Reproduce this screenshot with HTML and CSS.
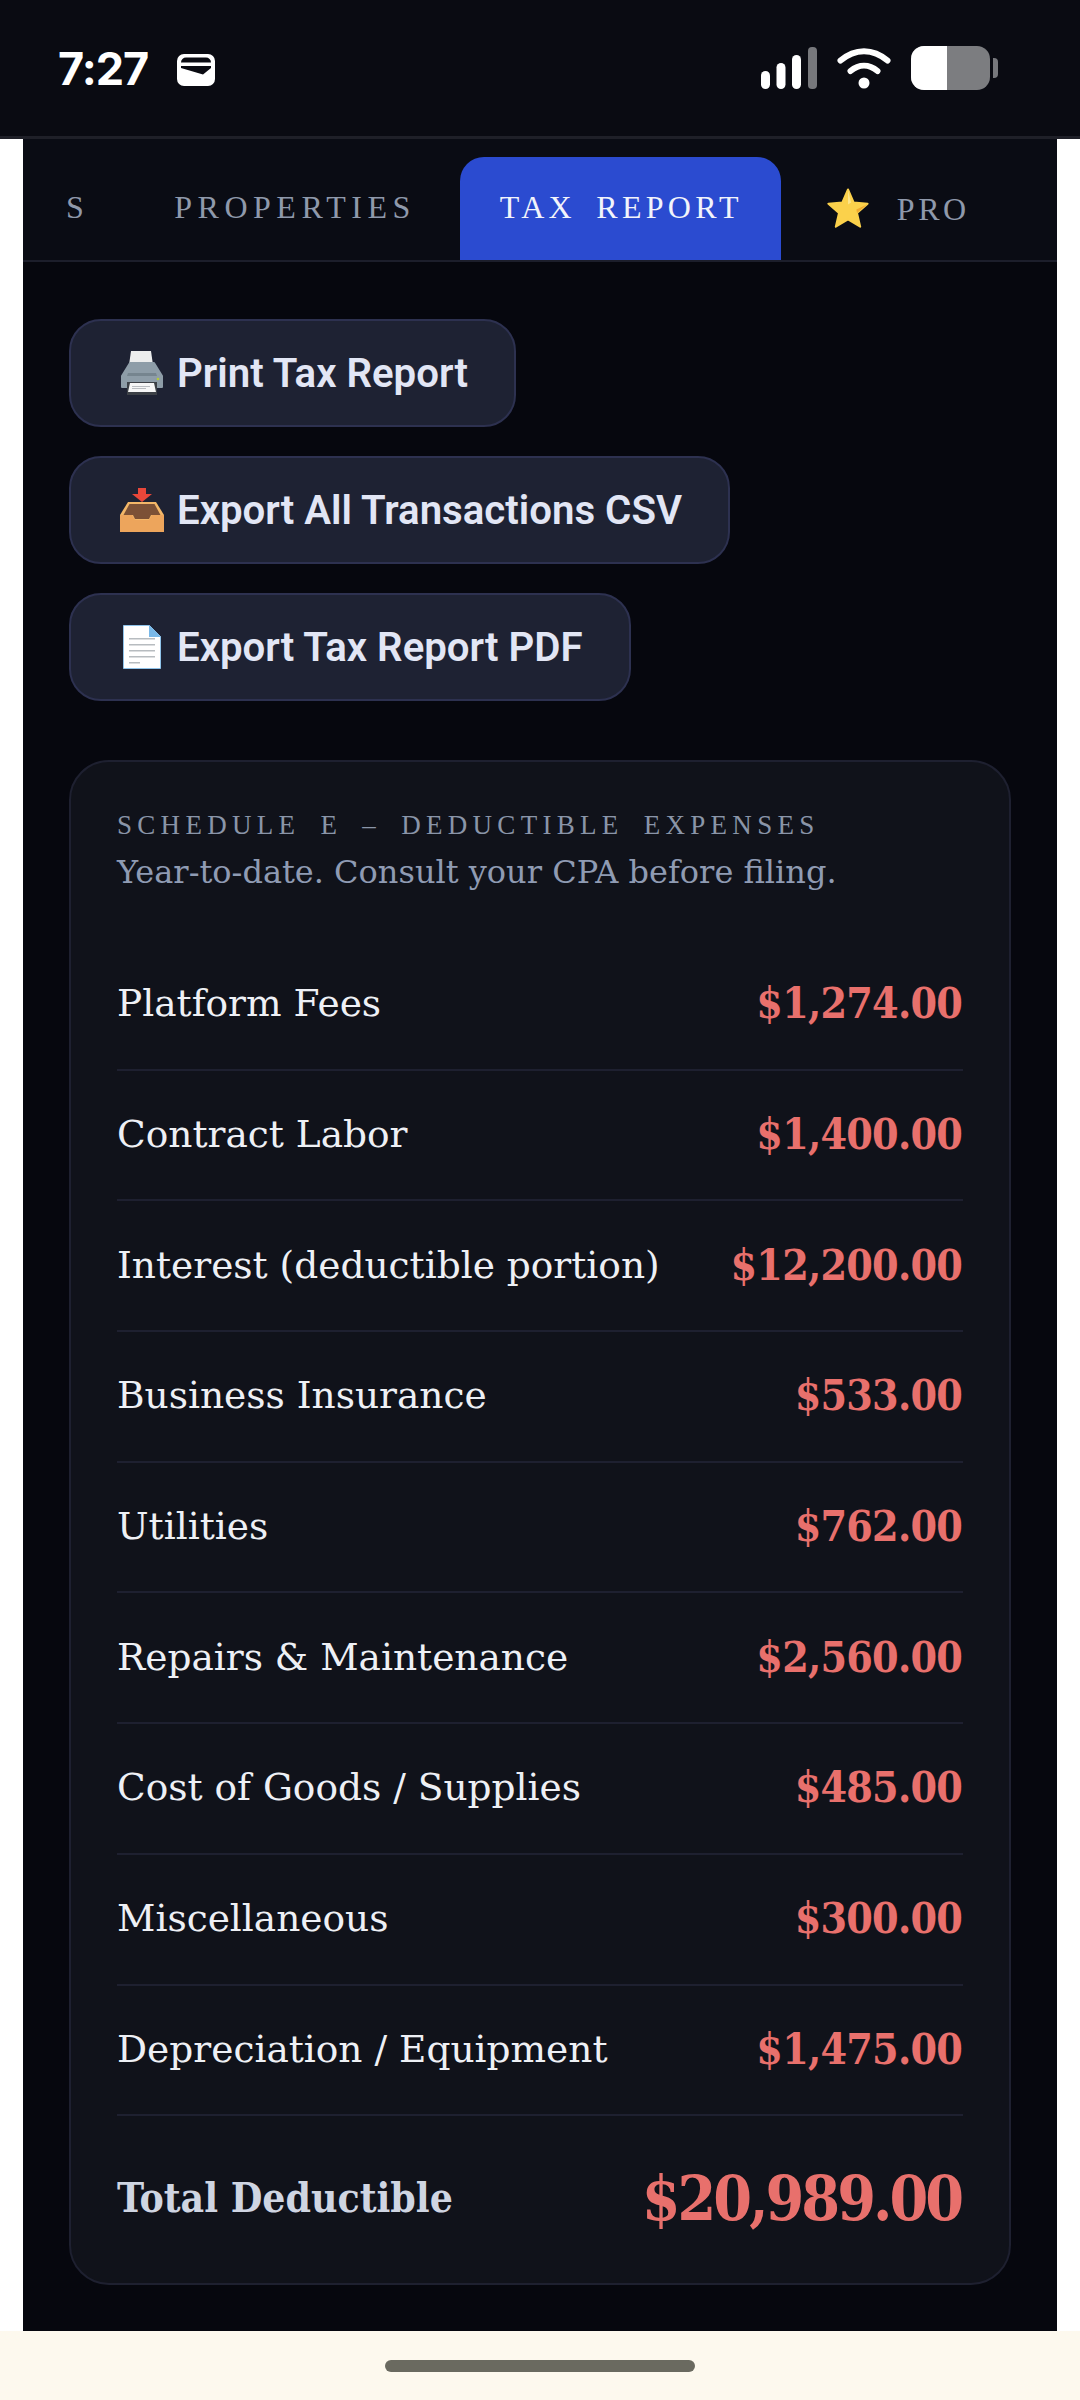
FILE: index.html
```html
<!DOCTYPE html>
<html lang="en">
<head>
  <meta charset="UTF-8">
  <meta name="viewport" content="width=device-width, initial-scale=1.0">
  <title>Tax Report</title>
  <link rel="stylesheet" href="styles.css">
</head>
<body>
  <header class="status">
    <div class="status-left">
      <span class="clock">7:27</span>
      <svg class="wallet" viewBox="0 0 38 32">
        <path fill="#fff" fill-rule="evenodd" d="M7 0h24a7 7 0 0 1 7 7v18a7 7 0 0 1-7 7H7a7 7 0 0 1-7-7V7a7 7 0 0 1 7-7zM4 8.500h30a5 5 0 0 0-5-5H9a5 5 0 0 0-5 5zM4 12v2l22 6.500 8-6.500v-2z"/>
      </svg>
    </div>
    <div class="status-right">
      <svg class="signal" viewBox="0 0 56 42">
        <rect x="0" y="24" width="9" height="18" rx="4.500" fill="#fff"/>
        <rect x="15.500" y="16" width="9" height="26" rx="4.500" fill="#fff"/>
        <rect x="31" y="8" width="9" height="34" rx="4.500" fill="#fff"/>
        <rect x="47" y="0" width="9" height="42" rx="4" fill="#77787c"/>
      </svg>
      <svg class="wifi" viewBox="0 0 54 42">
        <path d="M3.500 13.500C18 1 36 1 50.500 13.500" fill="none" stroke="#fff" stroke-width="6" stroke-linecap="round"/>
        <path d="M13.500 24C22 17 32 17 40.500 24" fill="none" stroke="#fff" stroke-width="6" stroke-linecap="round"/>
        <circle cx="27" cy="36" r="5.500" fill="#fff"/>
      </svg>
      <div class="battery">
        <div class="battery-body"><div class="battery-level"></div></div>
        <div class="battery-cap"></div>
      </div>
    </div>
  </header>

  <main class="page">
    <nav class="tabs">
      <div class="tab tab-cut">S</div>
      <div class="tab">PROPERTIES</div>
      <div class="tab active">TAX REPORT</div>
      <div class="tab tab-pro">
        <svg class="star" viewBox="0 0 42 40">
          <path fill="#fbd14b" stroke="#fbd14b" stroke-width="2" stroke-linejoin="round" d="M21 1.500l5.600 13 14 1.200-10.600 9.200 3.200 13.800L21 31.500 8.800 38.700 12 24.900 1.400 15.700l14-1.200z"/>
          <path fill="#f0a92e" d="M40 16.500L30 25l-.600-3.500z"/>
          <path fill="#fde58a" d="M21 2l3 12.500-3 2z"/>
        </svg>
        <span>PRO</span>
      </div>
    </nav>

    <div class="content">
      <div class="actions">
        <button class="btn">
          <svg class="emoji" viewBox="0 0 44 44">
            <path fill="#eceded" d="M11 0h20l2 14H9z"/>
            <path fill="#8e9da8" stroke="#8e9da8" stroke-width="2" stroke-linejoin="round" d="M10 12h24l8 13v11H2V25z"/>
            <path fill="#76858f" d="M8 22h28l1 3H7z"/>
            <circle cx="38" cy="28" r="1.300" fill="#b4c93c"/>
            <path fill="#3c4046" d="M7 31h30v13H7z"/>
            <path fill="#f6f6f6" d="M10 32h24l2 9H8z"/>
            <path fill="#b9bcc0" d="M12 35h18v1H12zM12 37h14v1H12z"/>
          </svg>
          Print Tax Report
        </button>
        <button class="btn">
          <svg class="emoji" viewBox="0 0 44 44">
            <path fill="#e8473a" d="M18 0h8v6h6L22 14 12 6h6z"/>
            <path fill="#f3b768" d="M8 14h28l8 13v17H0V27z"/>
            <path fill="#7c5136" d="M9.500 16h25l6 11H31l-2 4H15l-2-4H3.500z"/>
            <path fill="#eda55c" d="M0 27h12l3 5h14l3-5h12v17H0z"/>
          </svg>
          Export All Transactions CSV
        </button>
        <button class="btn">
          <svg class="emoji" viewBox="0 0 44 44">
            <path fill="#fff" stroke="#8fc3ea" stroke-width="1" d="M3.500 .5h26l11 11v32h-37z"/>
            <path fill="#79b8e8" d="M29 0l12 12H29z"/>
            <path fill="#b7bcc0" d="M9 13h26v1.500H9zM9 19h26v1.500H9zM9 25h26v1.500H9zM9 31h26v1.500H9zM9 37h11v1.500H9z"/>
          </svg>
          Export Tax Report PDF
        </button>
      </div>

      <section class="card">
        <div class="card-title">SCHEDULE E – DEDUCTIBLE EXPENSES</div>
        <p class="card-note">Year-to-date. Consult your CPA before filing.</p>
        <div class="rows">
          <div class="row"><span>Platform Fees</span><span class="amt">$1,274.00</span></div>
          <div class="row"><span>Contract Labor</span><span class="amt">$1,400.00</span></div>
          <div class="row"><span>Interest (deductible portion)</span><span class="amt">$12,200.00</span></div>
          <div class="row"><span>Business Insurance</span><span class="amt">$533.00</span></div>
          <div class="row"><span>Utilities</span><span class="amt">$762.00</span></div>
          <div class="row"><span>Repairs &amp; Maintenance</span><span class="amt">$2,560.00</span></div>
          <div class="row"><span>Cost of Goods / Supplies</span><span class="amt">$485.00</span></div>
          <div class="row"><span>Miscellaneous</span><span class="amt">$300.00</span></div>
          <div class="row"><span>Depreciation / Equipment</span><span class="amt">$1,475.00</span></div>
          <div class="row total"><span>Total Deductible</span><span class="amt">$20,989.00</span></div>
        </div>
      </section>
    </div>
  </main>

  <footer class="home-bar"><div class="home-pill"></div></footer>
</body>
</html>
```

FILE: styles.css
```css
html, body {
  margin: 0;
  padding: 0;
}
body {
  width: 1080px;
  height: 2400px;
  background: #fff;
  display: flex;
  flex-direction: column;
  overflow: hidden;
  font-family: "DejaVu Serif", "Liberation Serif", serif;
}

/* status bar */
.status {
  height: 136px;
  flex: none;
  background: #0a0b12;
  border-bottom: 3px solid #1f2028;
  display: flex;
  justify-content: space-between;
  align-items: center;
  padding: 0 82px 0 58px;
  color: #fff;
}
.status-left {
  display: flex;
  align-items: center;
  gap: 29px;
}
.clock {
  font-family: Inter, "Liberation Sans", sans-serif;
  font-weight: 700;
  font-size: 45px;
  letter-spacing: -1px;
}
.wallet {
  width: 38px;
  height: 32px;
  margin-top: 3px;
}
.status-right {
  display: flex;
  align-items: center;
  gap: 20px;
}
.signal {
  width: 56px;
  height: 42px;
}
.wifi {
  width: 54px;
  height: 42px;
}
.battery {
  display: flex;
  align-items: center;
  gap: 3px;
}
.battery-body {
  width: 79px;
  height: 44px;
  border-radius: 13px;
  background: #7c7d80;
  overflow: hidden;
}
.battery-level {
  width: 36px;
  height: 100%;
  background: #fff;
}
.battery-cap {
  width: 5px;
  height: 20px;
  background: #77787c;
  border-radius: 0 4px 4px 0;
}

/* page column */
.page {
  flex: 1;
  margin: 0 23px;
  background: #06070e;
  min-height: 0;
}
.tabs {
  height: 121px;
  background: #0a0c14;
  border-bottom: 2px solid #1c1e2b;
  display: flex;
  align-items: flex-end;
  gap: 6px;
  padding-left: 5px;
  overflow: hidden;
}
.tab {
  height: 101px;
  padding: 0 38px 2px;
  display: flex;
  align-items: center;
  font-family: "Liberation Serif", serif;
  font-size: 32px;
  letter-spacing: 5.500px;
  color: #8f99ab;
  white-space: nowrap;
}
.tab-cut {
  margin-right: 3px;
}
.tab.active {
  padding-left: 40px;
  background: #2b4bd0;
  color: #f2f4fb;
  border-radius: 24px 24px 0 0;
  letter-spacing: 4.300px;
  word-spacing: 8px;
}
.tab-pro {
  gap: 28px;
  letter-spacing: 3.500px;
  padding-top: 4px;
  height: 97px;
}
.star {
  width: 42px;
  height: 40px;
  margin-left: 2px;
  margin-top: -4px;
}

.content {
  padding: 57px 46px 0;
}
.actions {
  display: flex;
  flex-direction: column;
  align-items: flex-start;
  gap: 29px;
}
.btn {
  height: 108px;
  padding: 0 46px 0 49px;
  display: flex;
  align-items: center;
  gap: 13px;
  background: #1e2233;
  border: 2px solid #2d3150;
  border-radius: 32px;
  font-family: Roboto, "Liberation Sans", sans-serif;
  font-weight: 600;
  font-size: 40.200px;
  color: #e2e6f5;
}
.emoji {
  width: 44px;
  height: 44px;
  flex: none;
}

/* schedule card */
.card {
  margin-top: 59px;
  background: #10121a;
  border: 2px solid #1e2030;
  border-radius: 40px;
  padding: 46px 46px 0;
}
.card-title {
  font-family: "Liberation Serif", serif;
  font-size: 27px;
  letter-spacing: 5.300px;
  word-spacing: 8px;
  color: #8a95a8;
  line-height: 34px;
}
.card-note {
  margin: 8px 0 0;
  font-size: 32px;
  line-height: 44px;
  color: #8f9bb3;
}
.rows {
  margin-top: 46px;
}
.row {
  height: 126.700px;
  padding-bottom: 2px;
  border-bottom: 2px solid #1e2030;
  display: flex;
  justify-content: space-between;
  align-items: center;
  font-size: 37.500px;
  color: #eef0f5;
}
.amt {
  font-weight: 700;
  font-size: 42.500px;
  letter-spacing: -.8px;
  margin-right: 1px;
  font-stretch: condensed;
  color: #e8706c;
}
.total {
  border-bottom: 0;
  height: 164.500px;
  color: #cfd5e2;
  font-weight: 700;
  font-size: 40.500px;
  font-stretch: condensed;
}
.total .amt {
  font-size: 62px;
  letter-spacing: -3px;
  margin-right: 2px;
}

.home-bar {
  height: 69px;
  flex: none;
  background: #fdf9ee;
  display: flex;
  justify-content: center;
  padding-top: 29px;
  box-sizing: border-box;
}
.home-pill {
  width: 310px;
  height: 12px;
  border-radius: 6px;
  background: #6a6a60;
}
```
